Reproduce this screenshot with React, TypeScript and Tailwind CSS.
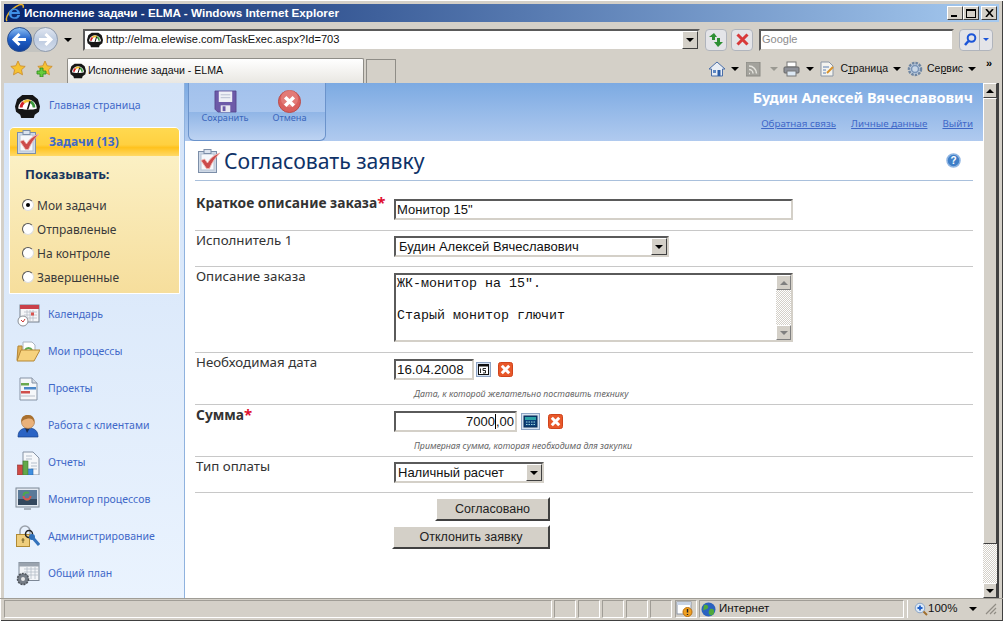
import React from "react";

const Gauge = ({ s = 16 }: { s?: number }) => (
  <svg width={s} height={s} viewBox="0 0 24 24" className="shrink-0">
    <path d="M7 1h10l5 4 2 7-1 5-4 3-1 3H6l-1-3-4-3-1-5 2-7z" fill="#161616" />
    <path d="M3 14a9 9 0 0 1 18 0c-3 1.500-15 1.500-18 0z" fill="#fff" />
    <path d="M4.500 13a7.500 7.500 0 0 1 3-6l1.800 2a5 5 0 0 0-2 4z" fill="#d4242a" />
    <path d="M7.500 7a7.500 7.500 0 0 1 8-.8l-1 2.400a5 5 0 0 0-5.200.4z" fill="#f0c030" />
    <path d="M15.500 6.200a7.500 7.500 0 0 1 4 6.800h-2.500a5 5 0 0 0-2.500-4.400z" fill="#3c9a3c" />
    <path d="M12 15l2.500-8" stroke="#111" strokeWidth="1.500" />
  </svg>
);

const Check = ({ s = 24 }: { s?: number }) => (
  <svg width={s} height={s} viewBox="0 0 24 24" className="shrink-0">
    <rect x="1.500" y="2.500" width="18" height="21" fill="#cfd9e6" stroke="#7c8ea8" />
    <rect x="4" y="5" width="13" height="16" fill="#f6f8fb" stroke="#b7c3d3" />
    <rect x="7" y="0.500" width="7" height="4" fill="#dbe3ee" stroke="#7c8ea8" />
    <path d="M4 11.500l3.500-1.500 3 4c3-5 6.500-8 12.500-10-4.500 4.500-8 9-10.500 15.500h-3z" fill="#cc4a4a" stroke="#eeb6b0" strokeWidth="0.900" />
  </svg>
);

const IELogo = () => (
  <svg width="19" height="19" viewBox="0 0 20 20">
    <path d="M2 19C0 16 4 7 15 2c3-1 5 0 4 3" fill="none" stroke="#e9b32a" strokeWidth="1.600" />
    <path d="M4 11a6 6 0 0 1 11-2.500c.6 1 .8 2 .8 3H7a3 3 0 0 0 6 1h3a6.200 6.200 0 0 1-12-1.500zM7.200 9.500h5.500a2.800 2.800 0 0 0-5.500 0z" fill="#3f8fe6" fillRule="evenodd" />
  </svg>
);

const NavCircle = ({ dim }: { dim?: boolean }) => (
  <svg width="25" height="25" viewBox="0 0 25 25" className="shrink-0">
    <defs>
      <linearGradient id={dim ? "navd" : "navb"} x1="0" y1="0" x2="0" y2="1">
        <stop offset="0" stopColor={dim ? "#e2e8f2" : "#8fc1f4"} />
        <stop offset="0.5" stopColor={dim ? "#bdcbe0" : "#1f5fc8"} />
        <stop offset="1" stopColor={dim ? "#d5deec" : "#0f3f9c"} />
      </linearGradient>
    </defs>
    <circle cx="12.500" cy="12.500" r="12" fill={`url(#${dim ? "navd" : "navb"})`} stroke={dim ? "#8d99aa" : "#2a4f8e"} />
    {dim ? (
      <path d="M6 12.500h11M12.500 7l5.500 5.500-5.500 5.500" fill="none" stroke="#fff" strokeWidth="3" />
    ) : (
      <path d="M19 12.500H8M12.500 7L7 12.500l5.500 5.500" fill="none" stroke="#fff" strokeWidth="3" />
    )}
  </svg>
);

const Star = ({ plus }: { plus?: boolean }) => (
  <svg width="17" height="17" viewBox="0 0 17 17" className="shrink-0">
    <path d="M9 1l2.200 4.800 5 .6-3.700 3.400 1 5-4.500-2.500L4.500 14.800l1-5L1.800 6.400l5-.6z" fill="#f6c233" stroke="#c9892a" strokeWidth="0.800" />
    {plus && <path d="M1 11h3V8h3v3h3v3H7v3H4v-3H1z" fill="#68cc3c" stroke="#2b8a1c" strokeWidth="0.800" />}
  </svg>
);

const DropCaret = () => <span className="inline-block w-0 h-0 border-x-[4px] border-x-transparent border-t-[4px] border-t-black shrink-0" />;

const ComboBtn = () => (
  <span className="w-[16px] h-full bg-[#d4d0c8] border border-t-white border-l-white border-b-[#404040] border-r-[#404040] flex items-center justify-center shrink-0">
    <DropCaret />
  </span>
);

const Calendar = () => (
  <svg width="24" height="24" viewBox="0 0 24 24">
    <rect x="4" y="2" width="19" height="17" fill="#f5f6f8" stroke="#76808e" />
    <rect x="4" y="2" width="19" height="4" fill="#c9404a" />
    <path d="M8 9h13M8 12h13M8 15h13M11 7v11M14 7v11M17 7v11" stroke="#b7bec8" strokeWidth="0.800" />
    <rect x="15" y="9.500" width="3" height="3" fill="#d9534f" />
    <circle cx="7" cy="18" r="5" fill="#fff" stroke="#8a8f96" />
    <path d="M5 17l2 2 2-3" stroke="#c33" fill="none" />
  </svg>
);
const Folder = () => (
  <svg width="24" height="24" viewBox="0 0 24 24">
    <path d="M7 2h9l3 3v9H7z" fill="#fff" stroke="#aab3bf" />
    <path d="M9 10a4 4 0 0 1 7 0" fill="none" stroke="#5aa84e" strokeWidth="2" />
    <path d="M2 6h4v14H1z" fill="#e2b257" stroke="#b58736" />
    <path d="M1 21l4-11h19l-6 11z" fill="#f6d27d" stroke="#b58736" />
  </svg>
);
const Projects = () => (
  <svg width="24" height="24" viewBox="0 0 24 24">
    <path d="M4 1h12l5 5v17H4z" fill="#f5f7fa" stroke="#8693a5" />
    <path d="M16 1v5h5" fill="#d5dce6" stroke="#8693a5" />
    <rect x="5" y="6" width="8" height="2.500" fill="#6aa84f" />
    <rect x="8" y="10" width="12" height="2.500" fill="#4a86c8" />
    <rect x="5" y="14" width="9" height="2.500" fill="#d0504c" />
    <path d="M5 19h14" stroke="#b9c1cc" />
  </svg>
);
const Person = () => (
  <svg width="24" height="24" viewBox="0 0 24 24">
    <path d="M2 23c0-6 3-9 10-9s10 3 10 9z" fill="#2a63c4" stroke="#16408a" strokeWidth="0.700" />
    <path d="M9 14l2 5 3-5z" fill="#1a2f55" />
    <circle cx="12" cy="8" r="6.500" fill="#eab17a" stroke="#a9723f" strokeWidth="0.700" />
    <path d="M5.500 8c-1-5 3-7.500 7-7 4 0 6 3 5.500 7-1-3-3-4-6-3.500-2 .5-5 1-6.500 3.500z" fill="#a8702f" />
  </svg>
);
const Report = () => (
  <svg width="24" height="24" viewBox="0 0 24 24">
    <path d="M7 1h10l6 6v17H7z" fill="#f5f7fa" stroke="#8693a5" />
    <path d="M10 5h6M10 8h6M15 12h6M15 15h6M15 18h6" stroke="#b5bfcc" />
    <rect x="1.500" y="14" width="5" height="10" fill="#cf4a45" stroke="#8f2b28" strokeWidth="0.600" />
    <rect x="7" y="10" width="5" height="14" fill="#63a84a" stroke="#3e7b2c" strokeWidth="0.600" />
    <rect x="12.500" y="18" width="4.500" height="6" fill="#3f8fe0" stroke="#2767ab" strokeWidth="0.600" />
  </svg>
);
const Monitor = () => (
  <svg width="25" height="25" viewBox="0 0 25 25">
    <rect x="1" y="1" width="23" height="19" fill="#e3e9f1" stroke="#7d8896" />
    <rect x="3" y="3" width="19" height="15" fill="#33475d" />
    <rect x="3" y="3" width="19" height="9" fill="#5a7a99" />
    <circle cx="12" cy="9" r="3.500" fill="none" stroke="#4ea84c" strokeWidth="2" strokeDasharray="7 4" />
    <path d="M8.500 9a3.500 3.500 0 0 0 7 0" fill="none" stroke="#d9534f" strokeWidth="2" />
    <path d="M9 22h7" stroke="#aab3bf" strokeWidth="2" />
  </svg>
);
const Admin = () => (
  <svg width="25" height="25" viewBox="0 0 25 25">
    <path d="M5 12V7a5 5 0 0 1 10 0v5" fill="none" stroke="#9aa1ab" strokeWidth="1.500" />
    <rect x="1.500" y="10.500" width="13" height="12" fill="#efce7d" stroke="#b08a34" />
    <path d="M8 14v5M6.500 16h3" stroke="#6b5a25" />
    <circle cx="14" cy="10" r="3.500" fill="none" stroke="#222" strokeWidth="1.500" />
    <circle cx="17" cy="13" r="3" fill="#2f6fb8" />
    <path d="M18 14l6 7" stroke="#3272bc" strokeWidth="3" />
  </svg>
);
const Plan = () => (
  <svg width="25" height="25" viewBox="0 0 25 25">
    <rect x="4" y="1.500" width="20" height="18" fill="#f3f5f8" stroke="#7d8896" />
    <rect x="4" y="1.500" width="20" height="4" fill="#9aa3ae" />
    <path d="M9 8h14M9 11h14M9 14h14M12 6v12M16 6v12M20 6v12" stroke="#b4bcc7" strokeWidth="0.800" />
    <circle cx="8" cy="18" r="5.500" fill="#777e87" stroke="#4d5259" strokeDasharray="2 1" strokeWidth="1.500" />
    <circle cx="8" cy="18" r="2" fill="#e8e8e8" />
  </svg>
);

const Save = () => (
  <svg width="23" height="23" viewBox="0 0 24 24">
    <path d="M1 1h22v22H4l-3-3z" fill="#6d5aa8" stroke="#534187" strokeWidth="0.800" />
    <rect x="5" y="1.500" width="14" height="11" fill="#eef0f6" />
    <path d="M7 5h10M7 8h10" stroke="#b6bdd0" />
    <rect x="7" y="16" width="10" height="7" fill="#e8e8f0" />
    <rect x="9" y="17" width="3" height="5" fill="#6d5aa8" />
  </svg>
);
const Cancel = () => (
  <svg width="23" height="23" viewBox="0 0 24 24">
    <circle cx="12" cy="12" r="11.500" fill="#d9605e" stroke="#b84a48" />
    <circle cx="12" cy="9" r="9" fill="#e88c88" opacity="0.600" />
    <path d="M7.500 7.500l9 9M16.500 7.500l-9 9" stroke="#fff" strokeWidth="3.600" />
  </svg>
);
const RedX = () => (
  <svg width="15" height="15" viewBox="0 0 15 15" className="shrink-0">
    <rect x="0.500" y="0.500" width="14" height="14" rx="2" fill="#e8582a" stroke="#d0441c" />
    <path d="M3.800 3.800l7.400 7.400M11.200 3.800l-7.400 7.400" stroke="#fff" strokeWidth="3" />
  </svg>
);

const navItems: [string, React.ReactNode][] = [
  ["Календарь", <Calendar />],
  ["Мои процессы", <Folder />],
  ["Проекты", <Projects />],
  ["Работа с клиентами", <Person />],
  ["Отчеты", <Report />],
  ["Монитор процессов", <Monitor />],
  ["Администрирование", <Admin />],
  ["Общий план", <Plan />],
];

const Radio = ({ on, label }: { on?: boolean; label: string }) => (
  <div className="h-[24px] flex items-center gap-[3px] text-[#3a3a3a]">
    <span className="w-[12px] h-[12px] rounded-full bg-white border border-t-[#555] border-l-[#555] border-b-[#ddd] border-r-[#ddd] flex items-center justify-center -mt-[3px]">
      {on && <span className="w-[4px] h-[4px] rounded-full bg-black" />}
    </span>
    <span>{label}</span>
  </div>
);

const inset = "border-2 border-t-[#5a5a5a] border-l-[#5a5a5a] border-b-[#d4d0c8] border-r-[#d4d0c8] bg-white";

const Label = ({ t, req }: { t: string; req?: boolean }) => (
  <div className={`w-[199px] shrink-0 pl-[1px] leading-[16px] text-[#333] ${req ? "font-bold text-[13.800px]" : "text-[13.300px]"}`}>
    {t}
    {req && <span className="text-[#e01030] text-[15px]">*</span>}
  </div>
);

const Hint = ({ t }: { t: string }) => (
  <div className="text-[8.800px] italic text-[#666] leading-[12px] pl-[20px] mt-[8px]">{t}</div>
);

const StatusCell = ({ w, children }: { w: string; children?: React.ReactNode }) => (
  <div className={`${w} h-[18px] border border-t-[#a09d96] border-l-[#a09d96] border-b-white border-r-white flex items-center shrink-0`}>{children}</div>
);

const scrollBtn = "h-[15px] bg-[#d4d0c8] border border-t-white border-l-white border-b-[#404040] border-r-[#404040] flex items-center justify-center shrink-0";

export default function App() {
  return (
    <div className="relative w-[1003px] h-[621px] bg-[#d4d0c8] flex flex-col overflow-hidden font-['Noto_Sans','Liberation_Sans',sans-serif] text-[12px] text-black shadow-[inset_1px_1px_0_#ffffff,inset_-1px_-1px_0_#404040]">
      {/* Title bar */}
      <div className="mt-[4px] mx-[4px] h-[18px] shrink-0 bg-gradient-to-r from-[#0a246a] to-[#a6caf0] flex items-center">
        <span className="ml-[1px] -mt-[2px]"><IELogo /></span>
        <span className="text-white font-bold text-[11.700px] font-['Liberation_Sans',sans-serif] flex-1">Исполнение задачи - ELMA - Windows Internet Explorer</span>
        <div className="flex gap-0 mr-[2px]">
          {["min", "max", "close"].map((k, i) => (
            <span key={k} className={`w-[16px] h-[14px] bg-[#d4d0c8] border border-t-white border-l-white border-b-[#404040] border-r-[#404040] flex items-center justify-center ${i === 2 ? "ml-[2px]" : ""}`}>
              {k === "min" && <span className="w-[6px] h-[2px] bg-black mt-[6px] -ml-[2px]" />}
              {k === "max" && <span className="w-[10px] h-[9px] border border-black border-t-2" />}
              {k === "close" && (
                <svg width="9" height="8" viewBox="0 0 9 8"><path d="M1 0l7 8M8 0L1 8" stroke="#000" strokeWidth="1.600" /></svg>
              )}
            </span>
          ))}
        </div>
      </div>
      {/* Address row */}
      <div className="h-[32px] shrink-0 flex items-center pt-[3px] pl-[7px] pr-[8px]">
        <div className="flex items-center bg-[#c4c4c0] rounded-full gap-[1px]">
          <NavCircle />
          <NavCircle dim />
        </div>
        <span className="ml-[6px] mr-[11px] flex"><DropCaret /></span>
        <div className={`w-[617px] h-[22px] ${inset} flex items-center`}>
          <span className="ml-[2px] mr-[3px]"><Gauge /></span>
          <span className="flex-1 font-['Liberation_Sans',sans-serif] text-[11.100px] text-[#111]">http://elma.elewise.com/TaskExec.aspx?Id=703</span>
          <ComboBtn />
        </div>
        <span className="ml-[5px] w-[22px] h-[22px] rounded-[4px] border border-[#b0b4bc] bg-[#e4e4e8] flex items-center justify-center">
          <svg width="16" height="14" viewBox="0 0 16 14"><path d="M6 0L1 4h3v3h3V4h2z" fill="#2e8f34" /><path d="M10 14l5-5h-3V5H9v4H6z" fill="#2e8f34" /></svg>
        </span>
        <span className="ml-[4px] w-[22px] h-[22px] rounded-[4px] border border-[#b0b4bc] bg-[#e4e4e8] flex items-center justify-center">
          <svg width="13" height="13" viewBox="0 0 13 13"><path d="M1.500 1.500l10 10M11.500 1.500l-10 10" stroke="#d8393a" strokeWidth="3" /></svg>
        </span>
        <div className={`ml-[6px] w-[195px] h-[22px] ${inset} flex items-center pl-[1px] text-[11px] text-[#8c8c8c] font-['Liberation_Sans',sans-serif]`}>Google</div>
        <span className="ml-[5px] h-[22px] w-[34px] rounded-[4px] border border-[#b0b4bc] bg-[#e4e4e8] flex items-center">
          <span className="flex-1 flex justify-center border-r border-[#b0b4bc] h-full items-center">
            <svg width="14" height="14" viewBox="0 0 14 14"><circle cx="8.500" cy="5" r="3.800" fill="none" stroke="#1c55d8" strokeWidth="2" /><path d="M5.500 8L2 12" stroke="#1c55d8" strokeWidth="2.500" /></svg>
          </span>
          <span className="w-[12px] flex justify-center"><span className="w-0 h-0 border-x-[3px] border-x-transparent border-t-[3px] border-t-[#1c55d8]" /></span>
        </span>
      </div>
      {/* Tabs row */}
      <div className="h-[29px] shrink-0 flex items-end pl-[9px] pr-[8px]">
        <div className="flex items-center gap-[10px] h-full pb-[1px]">
          <Star />
          <Star plus />
        </div>
        <div className="ml-[14px] w-[297px] h-[25px] bg-gradient-to-b from-white to-[#e9e7e2] border border-b-0 border-[#8f8d87] rounded-t-[2px] flex items-center pl-[2px] gap-[2px]">
          <Gauge />
          <span className="font-['Liberation_Sans',sans-serif] text-[10.600px] text-[#111]">Исполнение задачи - ELMA</span>
        </div>
        <div className="ml-[2px] w-[30px] h-[24px] border border-b-0 border-[#8f8d87]" />
        <div className="flex-1" />
        <div className="flex items-center h-full font-['Liberation_Sans',sans-serif] text-[10.500px] text-[#111] pr-[19px] pt-[1px]">
          <svg width="16" height="16" viewBox="0 0 16 16"><path d="M8 1L0 8h2.500v7h11V8H16z" fill="#e8edf4" stroke="#4a6ea8" /><rect x="8.500" y="9" width="3" height="6" fill="#2c5ea8" /><rect x="4" y="9" width="3" height="3" fill="#5c87c4" /></svg>
          <span className="ml-[6px] flex"><DropCaret /></span>
          <svg className="ml-[7px]" width="15" height="15" viewBox="0 0 15 15"><rect width="14" height="14" fill="#a3a29c" stroke="#8a8983" /><path d="M3 11.500h1M3 7.500a4 4 0 0 1 4 4M3 4a7.500 7.500 0 0 1 7.500 7.500" stroke="#e4e3dd" strokeWidth="1.500" fill="none" /></svg>
          <span className="ml-[9px] w-0 h-0 border-x-[4px] border-x-transparent border-t-[4px] border-t-[#9a9992]" />
          <svg className="ml-[5px]" width="17" height="16" viewBox="0 0 17 16"><rect x="4" y="1" width="9" height="5" fill="#fff" stroke="#777" /><rect x="1" y="6" width="15" height="6" rx="1" fill="#8d9098" stroke="#666" /><rect x="4" y="10" width="9" height="5" fill="#dce8f4" stroke="#777" /></svg>
          <span className="ml-[6px] flex"><DropCaret /></span>
          <svg className="ml-[6px]" width="15" height="16" viewBox="0 0 15 16"><path d="M1 1h8l4 4v10H1z" fill="#f3f3ef" stroke="#8b96a5" /><path d="M3 6h6M3 9h3M3 12h3" stroke="#5c7fb0" /><path d="M7 12l6-6" stroke="#d8922a" strokeWidth="2" /></svg>
          <span className="ml-[5px]">С<u>т</u>раница</span>
          <span className="ml-[5px] flex"><DropCaret /></span>
          <svg className="ml-[6px]" width="16" height="16" viewBox="0 0 16 16"><circle cx="8" cy="8" r="6" fill="#c8d6e6" stroke="#6f86a2" strokeWidth="2.500" strokeDasharray="2.500 1" /><circle cx="8" cy="8" r="3.500" fill="none" stroke="#7a95b8" strokeWidth="1.500" /></svg>
          <span className="ml-[4px]">Се<u>р</u>вис</span>
          <span className="ml-[5px] flex"><DropCaret /></span>
        </div>
      </div>
      <span className="absolute left-[986px] top-[57px] text-[11px] font-bold leading-[12px] font-['Liberation_Sans',sans-serif]">»</span>

      {/* Page */}
      <div className="flex-1 min-h-0 flex ml-[4px] mr-[4px] bg-white">
        {/* Sidebar */}
        <div className="w-[181px] shrink-0 h-full border-r border-[#8fb2de] bg-gradient-to-b from-[#d3e3f8] to-[#eaf3fe] flex flex-col text-[10.500px] text-[#3f68c8]">
          <div className="h-[44px] shrink-0 flex items-center pt-[2px] pl-[11px] gap-[9px]">
            <Gauge s={25} />
            <span>Главная страница</span>
          </div>
          <div className="mx-[5px] w-[171px] h-[167px] rounded-t-[5px] border border-white flex flex-col overflow-hidden">
            <div className="h-[28px] shrink-0 bg-[linear-gradient(#ffd950_0%,#ffd040_60%,#ffc21e_70%,#ffd966_100%)] flex items-center pl-[6px] gap-[9px]">
              <Check />
              <span className="font-bold text-[12px] text-[#3f68c8]">Задачи (13)</span>
            </div>
            <div className="flex-1 bg-gradient-to-b from-[#fbf0c4] to-[#f6de9c] pl-[12px] pt-[10px] text-[12px]">
              <div className="font-bold text-[13px] text-[#17365d] pl-[3px] mb-[12px] leading-[16px]">Показывать:</div>
              <Radio on label="Мои задачи" />
              <Radio label="Отправленые" />
              <Radio label="На контроле" />
              <Radio label="Завершенные" />
            </div>
          </div>
          <div className="flex flex-col mt-[2px]">
            {navItems.map(([t, ic]) => (
              <div key={t} className="h-[37px] flex items-center pl-[11px] gap-[8px]">
                <span className="w-[25px] flex justify-center">{ic}</span>
                <span>{t}</span>
              </div>
            ))}
          </div>
        </div>

        {/* Main */}
        <div className="flex-1 min-w-0 flex flex-col">
          <div className="h-[58px] shrink-0 bg-gradient-to-b from-[#7caae2] to-[#b0caef] flex pl-[3px] pr-[10px]">
            <div className="w-[138px] h-[58px] rounded-b-[6px] border border-t-0 border-[#6b93cb] bg-[linear-gradient(#a2c1ec_0%,#a9c6ee_50%,#90b5e6_51%,#bdd3f2_100%)] flex text-[9.200px] leading-[12px] text-[#3a66bc]">
              <div className="w-[72px] flex flex-col items-center pt-[7px]"><Save /><span className="-mt-[1px]">Сохранить</span></div>
              <div className="w-[57px] flex flex-col items-center pt-[7px]"><Cancel /><span className="-mt-[1px]">Отмена</span></div>
            </div>
            <div className="flex-1 flex flex-col items-end pt-[6px]">
              <div className="text-white font-bold text-[14.450px] leading-[18px]">Будин Алексей Вячеславович</div>
              <div className="flex gap-[15px] mt-[10px] text-[9.800px] leading-[14px] text-[#3f68c8] underline">
                <span>Обратная связь</span>
                <span>Личные данные</span>
                <span>Выйти</span>
              </div>
            </div>
          </div>

          <div className="px-[10px] flex-1 min-h-0">
            <div className="h-[40px] border-b border-[#a9c0dc] flex items-center pl-[2px] gap-[3px]">
              <Check />
              <span className="text-[21.200px] leading-[26px] text-[#0e3268] flex-1">Согласовать заявку</span>
              <svg className="mr-[12px]" width="15" height="15" viewBox="0 0 15 15"><circle cx="7.500" cy="7.500" r="6.500" fill="#3f7fc8" stroke="#8eb4e2" strokeWidth="1.500" /><text x="7.500" y="11" textAnchor="middle" fontSize="10" fontWeight="bold" fill="#fff" fontFamily="Liberation Sans">?</text></svg>
            </div>

            <div className="h-[50px] border-b border-[#c8c8c8] flex pt-[13px]">
              <Label t="Краткое описание заказа" req />
              <div className={`w-[399px] h-[21px] mt-[5px] ${inset} flex items-center pl-[1px] text-[13px] text-[#111] font-['Liberation_Sans',sans-serif]`}>Монитор 15"</div>
            </div>
            <div className="h-[36px] border-b border-[#c8c8c8] flex pt-[1px]">
              <Label t="Исполнитель 1" />
              <div className={`w-[275px] h-[21px] mt-[4px] ${inset} flex items-center pl-[3px] text-[13px] text-[#111] font-['Liberation_Sans',sans-serif]`}>
                <span className="flex-1 pt-[1px]">Будин Алексей Вячеславович</span>
                <ComboBtn />
              </div>
            </div>
            <div className="h-[86px] border-b border-[#c8c8c8] flex pt-[1px]">
              <Label t="Описание заказа" />
              <div className={`w-[399px] h-[69px] mt-[5px] ${inset} flex font-['Liberation_Mono',monospace] text-[13.330px] leading-[16px] text-[#111]`}>
                <div className="flex-1 pl-[1px] pt-[1px] whitespace-pre">{"ЖК-монитор на 15\".\n\nСтарый монитор глючит"}</div>
                <div className="w-[15px] h-full flex flex-col">
                  <span className="h-[15px] bg-[#d4d0c8] border border-t-white border-l-white border-b-[#808080] border-r-[#808080] flex items-center justify-center"><span className="w-0 h-0 border-x-[4px] border-x-transparent border-b-[4px] border-b-[#808080]" /></span>
                  <span className="flex-1 bg-[repeating-conic-gradient(#d4d0c8_0_25%,#ffffff_0_50%)] bg-[length:2px_2px]" />
                  <span className="h-[15px] bg-[#d4d0c8] border border-t-white border-l-white border-b-[#808080] border-r-[#808080] flex items-center justify-center"><span className="w-0 h-0 border-x-[4px] border-x-transparent border-t-[4px] border-t-[#808080]" /></span>
                </div>
              </div>
            </div>
            <div className="h-[52px] border-b border-[#c8c8c8] flex pt-[1px]">
              <Label t="Необходимая дата" />
              <div className="mt-[5px]">
                <div className="flex items-center">
                  <div className={`w-[80px] h-[21px] ${inset} flex items-center pl-[1px] text-[13.300px] text-[#111] font-['Liberation_Sans',sans-serif]`}>16.04.2008</div>
                  <svg className="ml-[2px]" width="15" height="15" viewBox="0 0 15 15"><rect x="0.500" y="0.500" width="14" height="14" fill="#d6e2f2" stroke="#8ea4c4" /><rect x="2.500" y="2.500" width="10" height="10" fill="#fff" stroke="#111" /><rect x="2.500" y="2.500" width="10" height="2" fill="#111" /><path d="M4.500 6.500v4.500M7 6.500h3M7 6.500v2h2.500v2.500H7" stroke="#111" fill="none" strokeWidth="0.900" /></svg>
                  <span className="ml-[7px]"><RedX /></span>
                </div>
                <Hint t="Дата, к которой желательно поставить технику" />
              </div>
            </div>
            <div className="h-[52px] border-b border-[#c8c8c8] flex pt-[1px]">
              <Label t="Сумма" req />
              <div className="mt-[5px]">
                <div className="flex items-center">
                  <div className={`w-[123px] h-[21px] ${inset} flex items-center justify-end pr-[1px] text-[13px] text-[#111] font-['Liberation_Sans',sans-serif]`}>7000<span className="w-px h-[15px] bg-black" />,00</div>
                  <svg className="ml-[4px]" width="19" height="17" viewBox="0 0 19 17"><rect x="0.500" y="0.500" width="18" height="16" fill="#d6e2f2" stroke="#8ea4c4" /><rect x="3" y="3" width="13" height="11" fill="#0c3f7a" stroke="#062a52" /><rect x="4" y="4" width="11" height="3" fill="#2ca3a8" /><path d="M5 9h9M5 11.500h9" stroke="#9fd6dc" strokeDasharray="1.500 1" /></svg>
                  <span className="ml-[8px]"><RedX /></span>
                </div>
                <Hint t="Примерная сумма, которая необходима для закупки" />
              </div>
            </div>
            <div className="h-[36px] border-b border-[#c8c8c8] flex pt-[1px]">
              <Label t="Тип оплаты" />
              <div className={`w-[150px] h-[21px] mt-[4px] ${inset} flex items-center pl-[2px] text-[13px] text-[#111] font-['Liberation_Sans',sans-serif]`}>
                <span className="flex-1 pt-[1px]">Наличный расчет</span>
                <ComboBtn />
              </div>
            </div>
            <div className="flex flex-col items-end w-[355px] pt-[4px] gap-[4px] text-[12.500px] text-[#222] font-['Liberation_Sans',sans-serif]">
              <div className="w-[115px] h-[24px] bg-[#d4d0c8] border-2 border-t-white border-l-white border-b-[#404040] border-r-[#404040] flex items-center justify-center">Согласовано</div>
              <div className="w-[158px] h-[24px] bg-[#d4d0c8] border-2 border-t-white border-l-white border-b-[#404040] border-r-[#404040] flex items-center justify-center">Отклонить заявку</div>
            </div>
          </div>
        </div>

        {/* Scrollbar */}
        <div className="w-[16px] h-full shrink-0 bg-[repeating-conic-gradient(#d4d0c8_0_25%,#ffffff_0_50%)] bg-[length:2px_2px] flex flex-col border-r-2 border-[#404040]">
          <span className={scrollBtn}><span className="w-0 h-0 border-x-[4px] border-x-transparent border-b-[4px] border-b-black" /></span>
          <span className="h-[446px] bg-[#d4d0c8] border border-t-white border-l-white border-b-[#404040] border-r-[#404040] shrink-0" />
          <span className="flex-1" />
          <span className={scrollBtn}><span className="w-0 h-0 border-x-[4px] border-x-transparent border-t-[4px] border-t-black" /></span>
        </div>
      </div>

      {/* Status bar */}
      <div className="h-[23px] shrink-0 border-t border-[#a09d96] flex items-start pt-[1px] gap-[2px] pl-[4px] pr-[6px] font-['Liberation_Sans',sans-serif] text-[11.500px] text-[#111]">
        <StatusCell w="w-[548px]" />
        <StatusCell w="w-[22px]" />
        <StatusCell w="w-[22px]" />
        <StatusCell w="w-[22px]" />
        <StatusCell w="w-[22px]" />
        <StatusCell w="w-[22px]" />
        <StatusCell w="w-[22px] ml-[1px]">
          <svg width="17" height="16" viewBox="0 0 17 16"><rect x="1" y="1" width="14" height="12" fill="#fff" stroke="#8a94a4" /><rect x="1" y="1" width="14" height="3" fill="#c8d4e6" /><circle cx="11.500" cy="11" r="4.500" fill="#f0a020" stroke="#b96f10" /><path d="M11.500 8v3.500M11.500 13v1" stroke="#222" strokeWidth="1.400" /></svg>
        </StatusCell>
        <StatusCell w="w-[205px]">
          <svg className="ml-[1px] mr-[3px]" width="15" height="15" viewBox="0 0 15 15"><circle cx="7.500" cy="7.500" r="7" fill="#2a62c0" /><path d="M3 3c3-1 5 1 4 3S3 7 2 9zM9 7c3-1 5 1 4 4s-4 3-5 1 0-3 1-5z" fill="#4fa83c" /></svg>
          Интернет
        </StatusCell>
        <div className="flex-1 h-[18px] flex items-center border-l border-white pl-[6px] ml-[1px]">
          <svg width="14" height="14" viewBox="0 0 14 14"><circle cx="6" cy="6" r="4.800" fill="#dbe9f8" stroke="#8ba4c4" /><path d="M6 3.500v5M3.500 6h5" stroke="#1f5fc8" strokeWidth="1.800" /><path d="M9.500 9.500L13 13" stroke="#a07030" strokeWidth="2" /></svg>
          <span>100%</span>
          <span className="ml-[12px] flex"><DropCaret /></span>
          <svg className="ml-auto" width="12" height="12" viewBox="0 0 12 12"><path d="M11 1L1 11M11 5L5 11M11 9L9 11" stroke="#908d85" strokeWidth="1.200" /></svg>
        </div>
      </div>
    </div>
  );
}
